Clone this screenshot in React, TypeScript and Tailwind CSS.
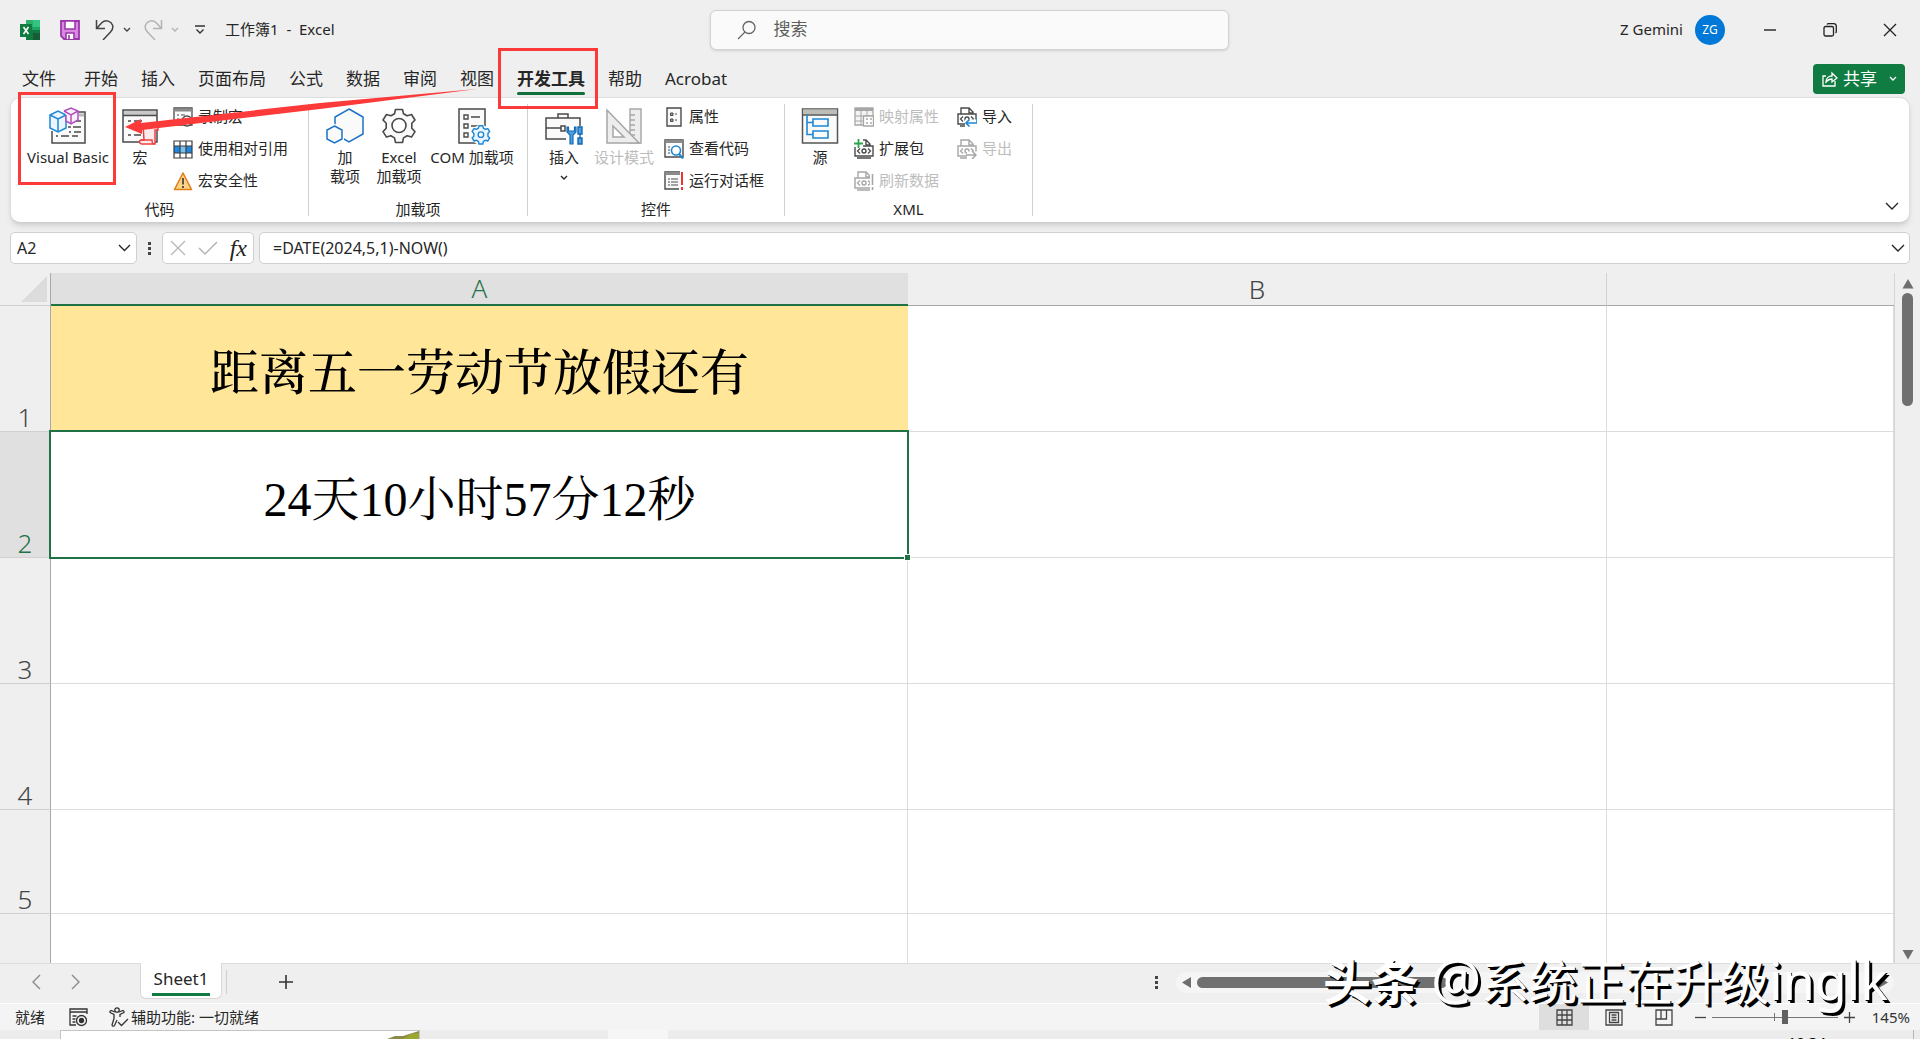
import type { ReactNode } from "react";

type IconProps = { children: ReactNode; size?: number };

function Icon({ children, size = 20 }: IconProps) {
  return (
    <svg width={size} height={size} viewBox={`0 0 ${size} ${size}`} fill="none" className="shrink-0" aria-hidden="true">
      {children}
    </svg>
  );
}

function Chevron({ w = 8, className = "" }: { w?: number; className?: string }) {
  const h = w / 2;
  return (
    <svg width={w + 2} height={h + 3} viewBox={`0 0 ${w + 2} ${h + 3}`} fill="none" stroke="currentColor" strokeWidth="1.4" className={`shrink-0 ${className}`} aria-hidden="true">
      <path d={`M1 1 L${w / 2 + 1} ${h + 1} L${w + 1} 1`} />
    </svg>
  );
}

const DARK = "#4a4a4a";
const BLUE = "#1e88d4";
const GRAY = "#a6a6a6";

const GEAR =
  "M14.500 1.500h7l1 4.200 3.600 2.100 4.400-1.300 3.500 5.500-3.200 3.300v5l3.200 3.300-3.500 5.500-4.400-1.300-3.600 2.100-1 4.600h-7l-1-4.600-3.600-2.100-4.400 1.300L2 23.600l3.200-3.300v-5L2 12l3.500-5.500 4.400 1.300 3.600-2.100z";

function VisualBasicIcon() {
  return (
    <Icon size={38}>
      <path d="M4 5h32v31H4z" fill="#fafafa" />
      <path d="M26 5h10v31H3V24" stroke={DARK} strokeWidth="1.5" />
      <path d="M30 8h5" stroke="#bbb" strokeWidth="3" />
      <path d="M27 14h5M24 20h8M20 25h2M25 25h7M7 29h2M12 29h8M23 29h6M19 20h3" stroke={DARK} strokeWidth="1.4" />
      <path d="M1 8l8-4 8 4v13l-8 4-8-4z" fill="#eaf5fd" stroke={BLUE} strokeWidth="1.5" />
      <path d="M1 8l8 4 8-4M9 12v13" stroke={BLUE} strokeWidth="1.5" />
      <path d="M15 4l7-3 7 3v9l-7 4-5-3V8" fill="#faf0fb" stroke="#b14fc0" strokeWidth="1.500" />
      <path d="M15 4l7 4 7-4M22 8v9" stroke="#b14fc0" strokeWidth="1.5" />
    </Icon>
  );
}

function MacroIcon() {
  return (
    <Icon size={38}>
      <path d="M2 3h34v32H2z" fill="#fafafa" stroke={DARK} strokeWidth="1.5" />
      <path d="M3 6h32" stroke="#c8c8c8" strokeWidth="4" />
      <path d="M2 8.500h34M7 14h3M13 14h8M7 20h8M7 28h3M13 28h7" stroke={DARK} strokeWidth="1.4" />
      <path d="M22 18h12c3 0 3 4 3 5h-3v14H21c-3 0-3-4-1-4h3z" fill="#fdeaea" stroke="#ee4040" strokeWidth="1.5" />
      <path d="M20 33h11c0 2 0 4 2 4" stroke="#ee4040" strokeWidth="1.5" />
    </Icon>
  );
}

function RecordIcon() {
  return (
    <Icon>
      <path d="M1 1h18v17H1z" fill="#fafafa" stroke={DARK} strokeWidth="1.3" />
      <path d="M1 3h18" stroke="#8a8a8a" strokeWidth="3" />
      <path d="M4 8h2M8 8h4M4 12h2" stroke={DARK} />
      <circle cx="14" cy="14" r="5" fill="#fff" stroke={DARK} strokeWidth="1.3" />
      <circle cx="14" cy="14" r="2" fill={DARK} />
    </Icon>
  );
}

function RelativeRefIcon() {
  return (
    <Icon>
      <path d="M1 2h18v17H1z" fill="#fff" />
      <path d="M1 7h6v7H1zM13 7h6v7h-6z" fill="#1e88e0" />
      <path d="M7 7h6v7H7z" fill="#7cc0f0" />
      <path d="M1 2h18v17H1zM7 2v17M13 2v17M1 7h18M1 14h18" stroke="#3c3c3c" strokeWidth="1.2" />
    </Icon>
  );
}

function WarningIcon() {
  return (
    <Icon>
      <path d="M10 2l8.500 16.500h-17z" fill="#fcd486" stroke="#e0801c" strokeWidth="1.6" strokeLinejoin="round" />
      <path d="M10 7v6.500M10 15v2" stroke="#333" strokeWidth="1.6" />
    </Icon>
  );
}

function HexIcon() {
  return (
    <Icon size={38}>
      <path d="M23 2l14 8v17l-14 8-14-8V10z" fill="#fafafa" stroke="#1a73c8" strokeWidth="1.5" />
      <path d="M8.500 19l7.500 4v9l-7.500 4L1 32v-9z" fill="#fafafa" stroke="#fff" strokeWidth="4" />
      <path d="M8.500 19l7.500 4v9l-7.500 4L1 32v-9z" fill="#fafafa" stroke="#1a73c8" strokeWidth="1.5" />
    </Icon>
  );
}

function GearIcon() {
  return (
    <Icon size={36}>
      <path d={GEAR} fill="#fafafa" stroke={DARK} strokeWidth="1.6" strokeLinejoin="round" />
      <circle cx="18" cy="17.500" r="7" fill="#fff" stroke={DARK} strokeWidth="1.6" />
    </Icon>
  );
}

function ComIcon() {
  return (
    <Icon size={38}>
      <path d="M6 2h26v34H6z" fill="#fafafa" stroke={DARK} strokeWidth="1.5" />
      <path d="M11 8h4v4h-4zM11 17h4v4h-4zM11 26h4v4h-4zM18 10h9M18 19h7" stroke={DARK} strokeWidth="1.400" />
      <circle cx="28" cy="28" r="10" fill="#fff" />
      <g transform="translate(18 18) scale(0.55)">
        <path d={GEAR} fill="#eaf5fd" stroke={BLUE} strokeWidth="2.600" strokeLinejoin="round" />
        <circle cx="18" cy="17.500" r="5" fill="#fff" stroke={BLUE} strokeWidth="2.600" />
      </g>
    </Icon>
  );
}

function ToolboxIcon() {
  return (
    <Icon size={38}>
      <path d="M1 11h34v21H1zM13 11V7h10v4" fill="#fafafa" stroke={DARK} strokeWidth="1.5" />
      <path d="M1 21h15M21 21h14M16 19h4v5h-4z" stroke={DARK} strokeWidth="1.5" />
      <path d="M21 19h17v18H21z" fill="#fff" />
      <path d="M22 20v5l3 3v9h3v-9l3-3v-5h-1.500v4h-6v-4z" fill="#4aa3e4" stroke="#1467b3" strokeWidth="1.2" />
      <path d="M33 20h4v7h-4zM35 27v4M33 31h4v6h-4z" fill="#4aa3e4" stroke="#1467b3" strokeWidth="1.4" />
    </Icon>
  );
}

function DesignIcon() {
  return (
    <Icon size={38}>
      <path d="M25 2h11v34H25z" fill="#ededed" stroke={GRAY} strokeWidth="1.4" />
      <path d="M25 8h5M25 13h5M25 18h5M25 23h5M25 28h5" stroke={GRAY} strokeWidth="1.400" />
      <path d="M2 3v33h32z" fill="#ededed" stroke={GRAY} strokeWidth="1.500" />
      <path d="M8 19v11h11z" fill="#fff" stroke={GRAY} strokeWidth="1.5" />
    </Icon>
  );
}

function PropertiesIcon() {
  return (
    <Icon>
      <path d="M3 1h14v18H3z" fill="#fafafa" stroke={DARK} strokeWidth="1.400" />
      <path d="M6.500 6h2.500v2.500H6.500zM6.500 12h2.500v2.500H6.500z" fill="#999" stroke={DARK} />
      <path d="M11 7h3M11 13h3" stroke={DARK} strokeDasharray="2 1" />
    </Icon>
  );
}

function ViewCodeIcon() {
  return (
    <Icon>
      <path d="M1 1h18v17H1z" fill="#fafafa" stroke={DARK} strokeWidth="1.4" />
      <path d="M1 2.500h18" stroke="#8a8a8a" strokeWidth="3" />
      <path d="M4 8h2M4 11h2M4 14h2" stroke={DARK} />
      <circle cx="12" cy="11.500" r="4.500" fill="#fff" stroke={BLUE} strokeWidth="1.6" />
      <path d="M15 15l4 4.500" stroke={BLUE} strokeWidth="2" />
    </Icon>
  );
}

function DialogIcon() {
  return (
    <Icon>
      <path d="M15 18H1V1h15" fill="#fafafa" stroke={DARK} strokeWidth="1.4" />
      <path d="M1 2.500h15" stroke="#8a8a8a" strokeWidth="3" />
      <path d="M4 8h2M7 8h7M4 11h2M7 11h7M4 14h2M7 14h7" stroke={DARK} />
      <path d="M18 1v13M18 16v3" stroke="#ee3333" strokeWidth="2" />
    </Icon>
  );
}

function SourceIcon() {
  return (
    <Icon size={38}>
      <path d="M1.500 2h35v34h-35z" fill="#fafafa" stroke="#555" strokeWidth="1.5" />
      <path d="M2 5h34" stroke="#bdbdb8" strokeWidth="5" />
      <path d="M1.500 8h35" stroke="#555" strokeWidth="1.500" />
      <path d="M12 12h15v7H12zM12 24h15v7H12zM6 8v19.500h6M6 15.500h6" stroke={BLUE} strokeWidth="1.6" />
    </Icon>
  );
}

function MapIcon() {
  return (
    <Icon>
      <path d="M1 1h18v17H1z" fill="#f4f4f4" stroke={GRAY} strokeWidth="1.300" />
      <path d="M1 2.500h18" stroke={GRAY} strokeWidth="3" />
      <path d="M1 9h18M1 14h9M7 4v14M13 4v5" stroke={GRAY} />
      <path d="M9.500 9h10v10h-10z" fill="#fff" stroke={GRAY} strokeWidth="1.300" />
      <path d="M12 12h2M16 12h2M12 16h2M16 16h2" stroke={GRAY} strokeWidth="1.500" />
    </Icon>
  );
}

function XmlDocIcon({ color, children }: { color: string; children?: ReactNode }) {
  return (
    <Icon>
      <path d="M4 7V1h8l4 4v2M12 1v5h4M3 19h14" stroke={color} strokeWidth="1.4" />
      <path d="M1 7h18v10H1z" fill="#fff" stroke={color} strokeWidth="1.400" />
      <path d="M6 9.500L3.500 12 6 14.500M14 9.500l2.500 2.500L14 14.500" stroke={color} strokeWidth="1.300" />
      <circle cx="10" cy="12" r="2" stroke={color} strokeWidth="1.400" />
      {children}
    </Icon>
  );
}

type BigProps = { icon: ReactNode; lines: string[]; className?: string; disabled?: boolean; arrow?: boolean };

function BigButton({ icon, lines, className = "", disabled = false, arrow = false }: BigProps) {
  return (
    <button type="button" disabled={disabled} className={`flex flex-col items-center pt-[3px] text-[15px] leading-[19px] whitespace-nowrap disabled:text-[#bdbdbd] ${className}`}>
      <span className="mb-[3px] flex h-[38px] items-center">{icon}</span>
      {lines.map((line) => (
        <span key={line}>{line}</span>
      ))}
      {arrow && <Chevron w={6} className="mt-2" />}
    </button>
  );
}

function SmallButton({ icon, label, disabled = false }: { icon: ReactNode; label: string; disabled?: boolean }) {
  return (
    <button type="button" disabled={disabled} className="flex h-[26px] items-center gap-[5px] text-[15px] leading-5 whitespace-nowrap disabled:text-[#bdbdbd]">
      {icon}
      <span className="pb-[2px]">{label}</span>
    </button>
  );
}

function Group({ label, className, children }: { label: string; className: string; children: ReactNode }) {
  return (
    <section aria-label={label} className={`flex shrink-0 flex-col border-r border-[#d0d0d0] ${className}`}>
      <div className="flex h-[98px] items-start">{children}</div>
      <div className="text-center text-[15px] leading-[14px]">{label}</div>
    </section>
  );
}

function TitleBar() {
  return (
    <header className="flex h-[60px] items-center">
      <div className="flex w-[37%] items-center pl-5">
        <Icon>
          <path d="M6 0h14v20H6z" fill="#21a366" />
          <path d="M6 0h7v7H6z" fill="#2fae6c" />
          <path d="M13 0h7v7h-7z" fill="#33c481" />
          <path d="M6 10h14v10H6z" fill="#107c41" />
          <path d="M13 13h7v7h-7z" fill="#185c37" />
          <path d="M0 4h12v13H0z" fill="#107c41" />
          <path d="M3.500 7l5 7M8.500 7l-5 7" stroke="#fff" strokeWidth="1.600" />
        </Icon>
        <button type="button" aria-label="保存" className="ml-5">
          <Icon>
            <path d="M1 1h18v18H4l-3-3z" fill="#d98ae0" stroke="#9b36ab" strokeWidth="1.800" />
            <path d="M5 1h10v8H5z" fill="#fff" stroke="#9b36ab" strokeWidth="1.600" />
            <path d="M6 19v-6h8v6" fill="#fff" stroke="#9b36ab" strokeWidth="1.600" />
            <path d="M9 15v4" stroke="#9b36ab" strokeWidth="1.600" />
          </Icon>
        </button>
        <button type="button" aria-label="撤消" className="ml-[15px] flex items-center gap-2 text-[#444]">
          <Icon>
            <path d="M1.500 0v8.500H10M2 8l5-5.500c4-3.500 9-1 10.500 2.500 1 3 0 5-2 7L8 20" stroke="currentColor" strokeWidth="1.500" />
          </Icon>
          <Chevron w={6} />
        </button>
        <button type="button" aria-label="恢复" className="ml-3 flex items-center gap-2 text-[#b3b3b3]">
          <Icon>
            <path d="M18.500 0v8.500H10M18 8l-5-5.500C9 -1 4 1.500 2.500 5c-1 3 0 5 2 7l7.500 8" stroke="currentColor" strokeWidth="1.500" />
          </Icon>
          <Chevron w={6} />
        </button>
        <button type="button" aria-label="自定义快速访问工具栏" className="ml-4 text-[#333]">
          <svg width="10" height="10" viewBox="0 0 10 10" fill="none" stroke="currentColor" strokeWidth="1.400" aria-hidden="true">
            <path d="M0 1h10M1.500 4.500L5 8l3.500-3.500" />
          </svg>
        </button>
        <h1 className="ml-5 pb-[2px] text-[15px] leading-5 whitespace-pre">工作簿1  -  Excel</h1>
      </div>
      <label className="flex h-10 w-[27%] items-center rounded-md border border-[#d2d2d2] bg-[#fafafa] pl-[26px] shadow-sm">
        <svg width="20" height="20" viewBox="0 0 20 20" fill="none" stroke="#666" strokeWidth="1.300" aria-hidden="true">
          <circle cx="12" cy="7.500" r="6" />
          <path d="M8 12l-7 7" />
        </svg>
        <input aria-label="搜索" placeholder="搜索" className="ml-4 min-w-0 flex-1 bg-transparent pb-[2px] text-[17px] leading-6 outline-none placeholder:text-[#5f5f5f]" />
      </label>
      <div className="flex h-full flex-1 items-center justify-end">
        <span className="pb-[2px] text-[15px] leading-5">Z Gemini</span>
        <span className="mr-[15px] ml-3 flex size-[30px] items-center justify-center rounded-full bg-[#0078d7] text-xs text-white">ZG</span>
        <button type="button" aria-label="最小化" className="flex h-full w-[60px] items-center justify-center">
          <svg width="12" height="12" viewBox="0 0 12 12" stroke="#222" strokeWidth="1.400" aria-hidden="true">
            <path d="M0 6h12" />
          </svg>
        </button>
        <button type="button" aria-label="还原" className="flex h-full w-[60px] items-center justify-center">
          <svg width="14" height="14" viewBox="0 0 14 14" fill="none" stroke="#222" strokeWidth="1.300" aria-hidden="true">
            <rect x="1" y="3.500" width="9.500" height="9.500" rx="1.500" />
            <path d="M4 1.500c.3-.5.600-.8 1.500-.8h5c2 0 2.800 1 2.800 2.800v5c0 .9-.3 1.200-.8 1.500" />
          </svg>
        </button>
        <button type="button" aria-label="关闭" className="flex h-full w-[60px] items-center justify-center">
          <svg width="14" height="14" viewBox="0 0 14 14" stroke="#222" strokeWidth="1.300" aria-hidden="true">
            <path d="M1 1l12 12M13 1L1 13" />
          </svg>
        </button>
      </div>
    </header>
  );
}

const TABS = ["文件", "开始", "插入", "页面布局", "公式", "数据", "审阅", "视图", "开发工具", "帮助", "Acrobat"];

function Tabs() {
  return (
    <nav className="flex h-[37px] items-center gap-[23px] pr-[15px] pl-[22px]">
      {TABS.map((tab) =>
        tab === "开发工具" ? (
          <button key={tab} type="button" className="relative text-[17px] leading-6 font-bold">
            {tab}
            <span className="absolute inset-x-0 -bottom-1 h-[3px] rounded-full bg-[#0f703b]" />
          </button>
        ) : (
          <button key={tab} type="button" className="text-[17px] leading-6 whitespace-nowrap first:mr-[5px]">
            {tab}
          </button>
        ),
      )}
      <button type="button" className="ml-auto flex h-[30px] items-center rounded-sm bg-[#107c41] px-2 text-[17px] leading-6 text-white">
        <svg width="18" height="18" viewBox="0 0 18 18" fill="none" stroke="currentColor" strokeWidth="1.300" aria-hidden="true">
          <path d="M5 6H2v10h12v-5M5 12c0-4 3-6 6-6V3l5 5-5 4V9c-2 0-4 .5-6 3z" />
        </svg>
        <span className="mr-3 ml-1">共享</span>
        <Chevron w={6} />
      </button>
    </nav>
  );
}

function Ribbon() {
  return (
    <div className="mx-[10px] flex rounded-[10px] border border-[#dedede] border-b-[#cfcfcf] bg-white py-[6px] shadow-md">
      <Group label="代码" className="w-[298px]">
        <BigButton className="ml-2 w-[98px]" icon={<VisualBasicIcon />} lines={["Visual Basic"]} />
        <BigButton className="w-[46px]" icon={<MacroIcon />} lines={["宏"]} />
        <div className="ml-[10px] flex flex-col gap-[6px]">
          <SmallButton icon={<RecordIcon />} label="录制宏" />
          <SmallButton icon={<RelativeRefIcon />} label="使用相对引用" />
          <SmallButton icon={<WarningIcon />} label="宏安全性" />
        </div>
      </Group>
      <Group label="加载项" className="w-[219px]">
        <BigButton className="ml-[13px] w-[46px]" icon={<HexIcon />} lines={["加", "载项"]} />
        <BigButton className="ml-[2px] w-[58px]" icon={<GearIcon />} lines={["Excel", "加载项"]} />
        <BigButton className="w-[88px]" icon={<ComIcon />} lines={["COM 加载项"]} />
      </Group>
      <Group label="控件" className="w-[257px]">
        <BigButton className="ml-3 w-12" icon={<ToolboxIcon />} lines={["插入"]} arrow />
        <BigButton className="ml-[2px] w-[68px]" icon={<DesignIcon />} lines={["设计模式"]} disabled />
        <div className="ml-[6px] flex flex-col gap-[6px]">
          <SmallButton icon={<PropertiesIcon />} label="属性" />
          <SmallButton icon={<ViewCodeIcon />} label="查看代码" />
          <SmallButton icon={<DialogIcon />} label="运行对话框" />
        </div>
      </Group>
      <Group label="XML" className="w-[248px]">
        <BigButton className="ml-[11px] w-12" icon={<SourceIcon />} lines={["源"]} />
        <div className="ml-[10px] flex w-[103px] flex-col gap-[6px]">
          <SmallButton icon={<MapIcon />} label="映射属性" disabled />
          <SmallButton
            icon={
              <XmlDocIcon color={DARK}>
                <path d="M0 0h9v8H0z" fill="#fff" />
                <path d="M4.500 0v9M0 4.500h9" stroke="#2ea44f" strokeWidth="1.800" />
              </XmlDocIcon>
            }
            label="扩展包"
          />
          <SmallButton
            icon={
              <XmlDocIcon color={GRAY}>
                <path d="M16 3h4v17h-4z" fill="#fff" />
                <path d="M18.500 3v11M18.500 16v3" stroke={GRAY} strokeWidth="1.600" />
              </XmlDocIcon>
            }
            label="刷新数据"
            disabled
          />
        </div>
        <div className="flex flex-col gap-[6px]">
          <SmallButton
            icon={
              <XmlDocIcon color={DARK}>
                <path d="M8 12.500h12V20H8z" fill="#fff" />
                <path d="M20 11v5H9M12.500 12.500L9 16l3.500 3.500" stroke={BLUE} strokeWidth="1.600" />
              </XmlDocIcon>
            }
            label="导入"
          />
          <SmallButton
            icon={
              <XmlDocIcon color={GRAY}>
                <path d="M10 12.500h10V20H10z" fill="#fff" />
                <path d="M9 16h10M15 12l4 4-4 4" stroke={GRAY} strokeWidth="1.500" />
              </XmlDocIcon>
            }
            label="导出"
            disabled
          />
        </div>
      </Group>
      <button type="button" aria-label="功能区显示选项" className="mr-[10px] mb-[5px] ml-auto self-end">
        <Chevron w={12} />
      </button>
    </div>
  );
}

function FormulaBar() {
  return (
    <div className="mx-[10px] mt-[9px] mb-[9px] flex h-8">
      <div className="flex w-[127px] items-center rounded-[5px] border border-[#cfcfcf] bg-white pr-[5px] pl-[6px]">
        <input aria-label="名称框" defaultValue="A2" className="min-w-0 flex-1 text-[16px] leading-5 outline-none" />
        <button type="button" aria-label="名称列表">
          <Chevron w={11} />
        </button>
      </div>
      <div className="flex w-[25px] flex-col items-center justify-center gap-[2px]">
        <span className="size-[3px] bg-[#444]" />
        <span className="size-[3px] bg-[#444]" />
        <span className="size-[3px] bg-[#444]" />
      </div>
      <div className="flex w-[92px] items-center justify-between rounded-[5px] border border-[#cfcfcf] bg-white px-[6px]">
        <button type="button" aria-label="取消" disabled>
          <svg width="18" height="18" viewBox="0 0 18 18" stroke="#b5b5b5" strokeWidth="1.300" aria-hidden="true">
            <path d="M2 2l14 14M16 2L2 16" />
          </svg>
        </button>
        <button type="button" aria-label="输入" disabled>
          <svg width="22" height="18" viewBox="0 0 22 18" fill="none" stroke="#b5b5b5" strokeWidth="1.500" aria-hidden="true">
            <path d="M2 9l6 6L20 3" />
          </svg>
        </button>
        <button type="button" aria-label="插入函数" className="font-['Liberation_Serif',serif] text-[24px] leading-6 text-[#222] italic">
          fx
        </button>
      </div>
      <div className="ml-[5px] flex flex-1 items-center rounded-[5px] border border-[#cfcfcf] bg-white pr-1 pl-[13px]">
        <input aria-label="编辑栏" defaultValue="=DATE(2024,5,1)-NOW()" className="min-w-0 flex-1 text-[16px] leading-5 outline-none" />
        <button type="button" aria-label="展开编辑栏">
          <Chevron w={12} />
        </button>
      </div>
    </div>
  );
}

const CELL = "border-r border-b border-[#dcdcdc] bg-white p-0";

function RowHead({ n, selected = false }: { n: string; selected?: boolean }) {
  return (
    <th
      scope="row"
      className={`border-r border-b border-r-[#a8a8a8] border-b-[#d0d0d0] p-0 align-bottom text-[26px] leading-7 font-light ${selected ? "bg-[#e0e0e0] text-[#1f7246]" : "text-[#444]"}`}
    >
      {n}
    </th>
  );
}

function EmptyRow({ n, className }: { n: string; className: string }) {
  return (
    <tr className={className}>
      <RowHead n={n} />
      <td className={CELL} />
      <td className={CELL} />
      <td className={CELL} />
    </tr>
  );
}

function Sheet() {
  return (
    <div className="flex min-h-0 flex-1">
      <div className="min-w-0 flex-1 overflow-hidden border-r border-[#d6d6d6]">
        <table className="w-full table-fixed border-separate border-spacing-0">
          <colgroup>
            <col className="w-[51px]" />
            <col className="w-[857px]" />
            <col className="w-[699px]" />
            <col />
          </colgroup>
          <thead>
            <tr className="h-[33px]">
              <td className="border-r border-b border-r-[#a8a8a8] border-b-[#d0d0d0] p-0">
                <svg width="26" height="26" viewBox="0 0 26 26" className="ml-[21px]" aria-hidden="true">
                  <path d="M26 0v26H0z" fill="#dcdcdc" />
                </svg>
              </td>
              <th scope="col" className="border-b-2 border-[#1f7246] bg-[#e0e0e0] p-0 text-[26px] leading-[31px] font-light text-[#1f7246]">
                A
              </th>
              <th scope="col" className="border-r border-b border-r-[#d0d0d0] border-b-[#a8a8a8] p-0 text-[26px] leading-[31px] font-light text-[#444]">
                B
              </th>
              <th scope="col" className="border-b border-[#a8a8a8] p-0" aria-label="C" />
            </tr>
          </thead>
          <tbody>
            <tr className="h-[126px]">
              <RowHead n="1" />
              <td className="bg-[#ffe699] p-0 pt-[10px] text-center font-['Liberation_Serif','Noto_Serif_CJK_SC','Noto_Sans_CJK_SC',serif] text-[49px] leading-[60px] font-medium text-black">
                距离五一劳动节放假还有
              </td>
              <td className={CELL} />
              <td className={CELL} />
            </tr>
            <tr className="h-[126px]">
              <RowHead n="2" selected />
              <td className="relative bg-white p-0 pt-[10px] text-center font-['Liberation_Serif','Noto_Serif_CJK_SC','Noto_Sans_CJK_SC',serif] text-[48px] leading-[60px] text-black">
                24天10小时57分12秒
                <span className="absolute -top-[2px] -right-px -bottom-px -left-[2px] border-2 border-[#1f7246]" />
                <span className="absolute -right-[3px] -bottom-[3px] size-[7px] border border-white bg-[#1f7246]" />
              </td>
              <td className={CELL} />
              <td className={CELL} />
            </tr>
            <EmptyRow n="3" className="h-[126px]" />
            <EmptyRow n="4" className="h-[126px]" />
            <EmptyRow n="5" className="h-[104px]" />
            <EmptyRow n="" className="h-[126px]" />
          </tbody>
        </table>
      </div>
      <div className="flex w-[25px] flex-col items-center pt-[5px] pb-[3px]">
        <svg width="12" height="10" viewBox="0 0 12 10" className="mt-px" aria-hidden="true">
          <path d="M6 0l5.500 9.500H.5z" fill="#6e6e6e" />
        </svg>
        <div className="mt-1 h-[113px] w-[11px] rounded-full bg-[#707070]" />
        <svg width="12" height="10" viewBox="0 0 12 10" className="mt-auto" aria-hidden="true">
          <path d="M6 9.500L11.500 0H.5z" fill="#6e6e6e" />
        </svg>
      </div>
    </div>
  );
}

function SheetTabs() {
  return (
    <div className="flex h-10 items-center border-t border-[#dcdcdc] pr-[26px] pb-[3px]">
      <button type="button" aria-label="上一张" className="ml-7 w-4 text-[#8a8a8a]">
        <Chevron w={14} className="rotate-90" />
      </button>
      <button type="button" aria-label="下一张" className="ml-6 w-4 text-[#8a8a8a]">
        <Chevron w={14} className="-rotate-90" />
      </button>
      <button type="button" className="-mt-px ml-14 flex h-9 w-[82px] justify-center self-start rounded-b-md border border-t-0 border-[#d8d8d8] bg-white pt-1 text-[17px] leading-6">
        <span className="h-[29px] border-b-[3px] border-[#107c41] px-[2px]">Sheet1</span>
      </button>
      <span className="ml-1 h-6 w-px bg-[#cfcfcf]" />
      <button type="button" aria-label="新工作表" className="ml-[52px]">
        <svg width="14" height="14" viewBox="0 0 14 14" stroke="#333" strokeWidth="1.600" aria-hidden="true">
          <path d="M7 0v14M0 7h14" />
        </svg>
      </button>
      <div className="ml-auto flex w-[39%] items-center gap-[18px]">
        <div className="flex flex-col gap-[2px]">
          <span className="size-[3px] bg-[#444]" />
          <span className="size-[3px] bg-[#444]" />
          <span className="size-[3px] bg-[#444]" />
        </div>
        <div className="flex h-[21px] flex-1 items-center rounded-full bg-[#f5f5f5] px-[6px]">
          <svg width="9" height="11" viewBox="0 0 9 11" aria-hidden="true">
            <path d="M0 5.500L9 0v11z" fill="#6e6e6e" />
          </svg>
          <div className="ml-[6px] h-[11px] w-[250px] rounded-full bg-[#707070]" />
          <svg width="9" height="11" viewBox="0 0 9 11" className="ml-auto" aria-hidden="true">
            <path d="M9 5.500L0 0v11z" fill="#6e6e6e" />
          </svg>
        </div>
      </div>
    </div>
  );
}

function StatusBar() {
  return (
    <footer className="flex h-[27px] items-center border-t border-white bg-[#f4f4f4] pr-[10px] pl-[15px] text-[15px] leading-5">
      <span>就绪</span>
      <button type="button" aria-label="录制宏" className="ml-6">
        <svg width="19" height="19" viewBox="0 0 19 19" fill="none" stroke="#333" strokeWidth="1.300" aria-hidden="true">
          <path d="M7 17H1V1h17v5M1 4h17M3.500 8h4M3.500 11h3M3.500 14h3" />
          <circle cx="12.500" cy="12.500" r="5" />
          <circle cx="12.500" cy="12.500" r="2" fill="#333" />
        </svg>
      </button>
      <button type="button" className="ml-[21px] flex items-center gap-[2px]">
        <svg width="20" height="20" viewBox="0 0 20 20" fill="none" stroke="#333" strokeWidth="1.300" aria-hidden="true">
          <circle cx="8" cy="3" r="2.200" />
          <path d="M6 5L2 3.500C.5 4 .5 5.500 2 6l3 1.500v4L3 18c.5 1.500 2 1.500 2.500.5L8 13M10 5l4-1.500c1.500.5 1.500 2 0 2.500l-3 1.500V10M9 15l3.500 3.500L19 12" />
        </svg>
        辅助功能: 一切就绪
      </button>
      <div className="ml-auto flex h-full items-center">
        <button type="button" aria-label="普通" className="flex h-full w-[50px] items-center justify-center bg-[#dedede]">
          <svg width="17" height="17" viewBox="0 0 17 17" fill="none" stroke="#444" strokeWidth="1.300" aria-hidden="true">
            <path d="M1 1h15v15H1zM6 1v15M11 1v15M1 6h15M1 11h15" />
          </svg>
        </button>
        <button type="button" aria-label="页面布局" className="flex h-full w-[50px] items-center justify-center">
          <svg width="18" height="17" viewBox="0 0 18 17" fill="none" stroke="#444" strokeWidth="1.300" aria-hidden="true">
            <path d="M1 1h16v15H1zM4.500 3.500h9v10h-9zM6.500 6h5M6.500 8.500h5M6.500 11h5" />
          </svg>
        </button>
        <button type="button" aria-label="分页预览" className="flex h-full w-[50px] items-center justify-center">
          <svg width="18" height="17" viewBox="0 0 18 17" fill="none" stroke="#444" strokeWidth="1.300" aria-hidden="true">
            <path d="M1 1h16v15H1zM1 10h10.500V1M6 1v9" />
          </svg>
        </button>
        <button type="button" aria-label="缩小" className="ml-[6px]">
          <svg width="11" height="11" viewBox="0 0 11 11" stroke="#444" strokeWidth="1.300" aria-hidden="true">
            <path d="M0 5.500h11" />
          </svg>
        </button>
        <div className="relative mx-[6px] flex w-[126px] items-center">
          <span className="absolute left-[62px] h-2 w-px bg-[#777]" />
          <input
            type="range"
            aria-label="显示比例"
            min={0}
            max={100}
            defaultValue={58}
            className="h-px w-full appearance-none bg-[#777] [&::-webkit-slider-thumb]:h-[14px] [&::-webkit-slider-thumb]:w-[6px] [&::-webkit-slider-thumb]:appearance-none [&::-webkit-slider-thumb]:bg-[#616161]"
          />
        </div>
        <button type="button" aria-label="放大">
          <svg width="11" height="11" viewBox="0 0 11 11" stroke="#444" strokeWidth="1.300" aria-hidden="true">
            <path d="M0 5.500h11M5.500 0v11" />
          </svg>
        </button>
        <span className="w-[55px] text-right text-[15px] text-[#333]">145%</span>
      </div>
    </footer>
  );
}

function Taskbar() {
  return (
    <div className="flex h-[9px] shrink-0 overflow-hidden bg-[#ececec] pl-[60px]">
      <div className="flex w-[360px] justify-end border border-b-0 border-[#c4c4c4] bg-white">
        <svg width="32" height="8" viewBox="0 0 32 8" aria-hidden="true">
          <path d="M0 8l8-3 8 0L32 0v8z" fill="#8d8a4a" />
          <path d="M16 8l8-5 8-1v6z" fill="#9aa832" />
        </svg>
      </div>
      <div className="ml-[188px] w-[60px] bg-[#f6f6f6]" />
      <span className="mr-[6px] ml-auto border-r border-[#b5b5b5] pt-[2px] pr-[87px] text-[15px] leading-5 text-black">10:34</span>
    </div>
  );
}

function Annotations() {
  return (
    <div className="pointer-events-none absolute inset-0">
      <div className="absolute top-[92px] left-[18px] h-[93px] w-[98px] border-[3px] border-[#fd3a3a]" />
      <div className="absolute top-[48px] left-[498px] h-[61px] w-[100px] border-[3px] border-[#fd3a3a]" />
      <svg width="360" height="50" viewBox="0 0 360 50" className="absolute top-[87px] left-[120px]" aria-hidden="true">
        <path d="M5 40L21 32v4l179-20L357 2 200 22 22 43v4z" fill="#fd3a3a" />
      </svg>
      <div className="absolute right-[32px] bottom-[25px] flex items-baseline text-[48px] leading-[64px] whitespace-nowrap text-white [text-shadow:3px_3px_0_#000,1px_1px_0_#000]">
        <span className="mr-3 font-bold">头条</span>
        <span className="text-[56px]">@</span>
        <span>系统正在升级</span>
        <span className="text-[52px]">inglk</span>
      </div>
    </div>
  );
}

export default function App() {
  return (
    <div className="relative flex h-screen flex-col overflow-hidden bg-[#efefef] font-['Noto_Sans','Noto_Sans_CJK_SC',sans-serif] text-[#262626]">
      <TitleBar />
      <Tabs />
      <Ribbon />
      <FormulaBar />
      <Sheet />
      <SheetTabs />
      <StatusBar />
      <Taskbar />
      <Annotations />
    </div>
  );
}
